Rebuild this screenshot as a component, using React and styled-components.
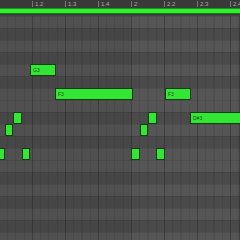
import styled, { createGlobalStyle } from "styled-components";

const GlobalStyle = createGlobalStyle`
  html, body {
    margin: 0;
    padding: 0;
    background: #3a3a3a;
    overflow: hidden;
  }
  body {
    font-family: "Liberation Sans", Arial, sans-serif;
  }
`;

const BEAT = 33;
const ORIGIN = -1;

const Roll = styled.div`
  width: 240px;
  height: 240px;
  display: flex;
  flex-direction: column;
  overflow: hidden;
  background: #3a3a3a;
`;

const Ruler = styled.div`
  position: relative;
  height: 8px;
  flex: none;
  background: #393939;
`;

const Tick = styled.div`
  position: absolute;
  top: 1px;
  height: 6px;
  border-left: 1px solid #777;
  padding-left: 2px;
  font-size: 6px;
  line-height: 6px;
  color: #a8a8a8;
  white-space: nowrap;
`;

const LoopBar = styled.div`
  height: 6px;
  flex: none;
  background: #2ef02e;
  border-top: 1px solid #1f8f1f;
  border-bottom: 1px solid #1a7a1a;
  box-sizing: border-box;
`;

const Gap = styled.div`
  height: 2px;
  flex: none;
  box-sizing: border-box;
  background: #383838;
  border-bottom: 1px solid #444;
`;

const Grid = styled.div`
  display: flex;
  flex-direction: column;
  flex: 1;
`;

const Row = styled.div`
  position: relative;
  height: 12px;
  flex: none;
  box-sizing: border-box;
  border-top: 1px solid rgba(0, 0, 0, 0.07);
  background-color: ${(p) => (p.$black ? "#4a4a4a" : "#555555")};
  background-image:
    linear-gradient(to right, rgba(0, 0, 0, 0.06) 0 131px, transparent 131px),
    repeating-linear-gradient(to right, rgba(0, 0, 0, 0.18) 0 1px, transparent 1px ${BEAT}px),
    repeating-linear-gradient(to right, rgba(0, 0, 0, 0.07) 0 1px, transparent 1px ${BEAT / 4}px);
  background-position: 0 0, ${ORIGIN}px 0, ${ORIGIN}px 0;
`;

const Note = styled.div`
  position: absolute;
  top: -1px;
  height: 12px;
  box-sizing: border-box;
  background: #33e633;
  border: 1px solid #123d12;
  font-size: 5px;
  line-height: 10px;
  padding-left: 2px;
  color: #1d501d;
  overflow: hidden;
  white-space: nowrap;
`;

const ticks = ["", "1.2", "1.3", "1.4", "2", "2.2", "2.3", "2.4"];

const names = ["B3", "A#3", "A3", "G#3", "G3", "F#3", "F3", "E3", "D#3", "D3", "C#3", "C3", "B2", "A#2", "A2", "G#2", "G2", "F#2", "F2"];

const notes = [
  { pitch: "G3", x: 30, w: 26, label: "G3" },
  { pitch: "F3", x: 55, w: 78, label: "F3" },
  { pitch: "F3", x: 165, w: 26, label: "F3" },
  { pitch: "D#3", x: 13, w: 9 },
  { pitch: "D#3", x: 148, w: 9 },
  { pitch: "D#3", x: 190, w: 60, label: "D#3" },
  { pitch: "D3", x: 5, w: 8 },
  { pitch: "D3", x: 140, w: 8 },
  { pitch: "C3", x: -3, w: 8 },
  { pitch: "C3", x: 22, w: 8 },
  { pitch: "C3", x: 131, w: 9 },
  { pitch: "C3", x: 156, w: 9 },
];

export default function App() {
  return (
    <Roll>
      <GlobalStyle />
      <Ruler>
        {ticks.map((t, i) => (
          <Tick key={i} style={{ left: ORIGIN + i * BEAT }}>{t}</Tick>
        ))}
      </Ruler>
      <LoopBar />
      <Gap />
      <Grid>
        {names.map((n) => (
          <Row key={n} $black={n.includes("#")}>
            {notes
              .filter((note) => note.pitch === n)
              .map((note, i) => (
                <Note key={i} style={{ left: note.x, width: note.w }}>{note.label}</Note>
              ))}
          </Row>
        ))}
      </Grid>
    </Roll>
  );
}
